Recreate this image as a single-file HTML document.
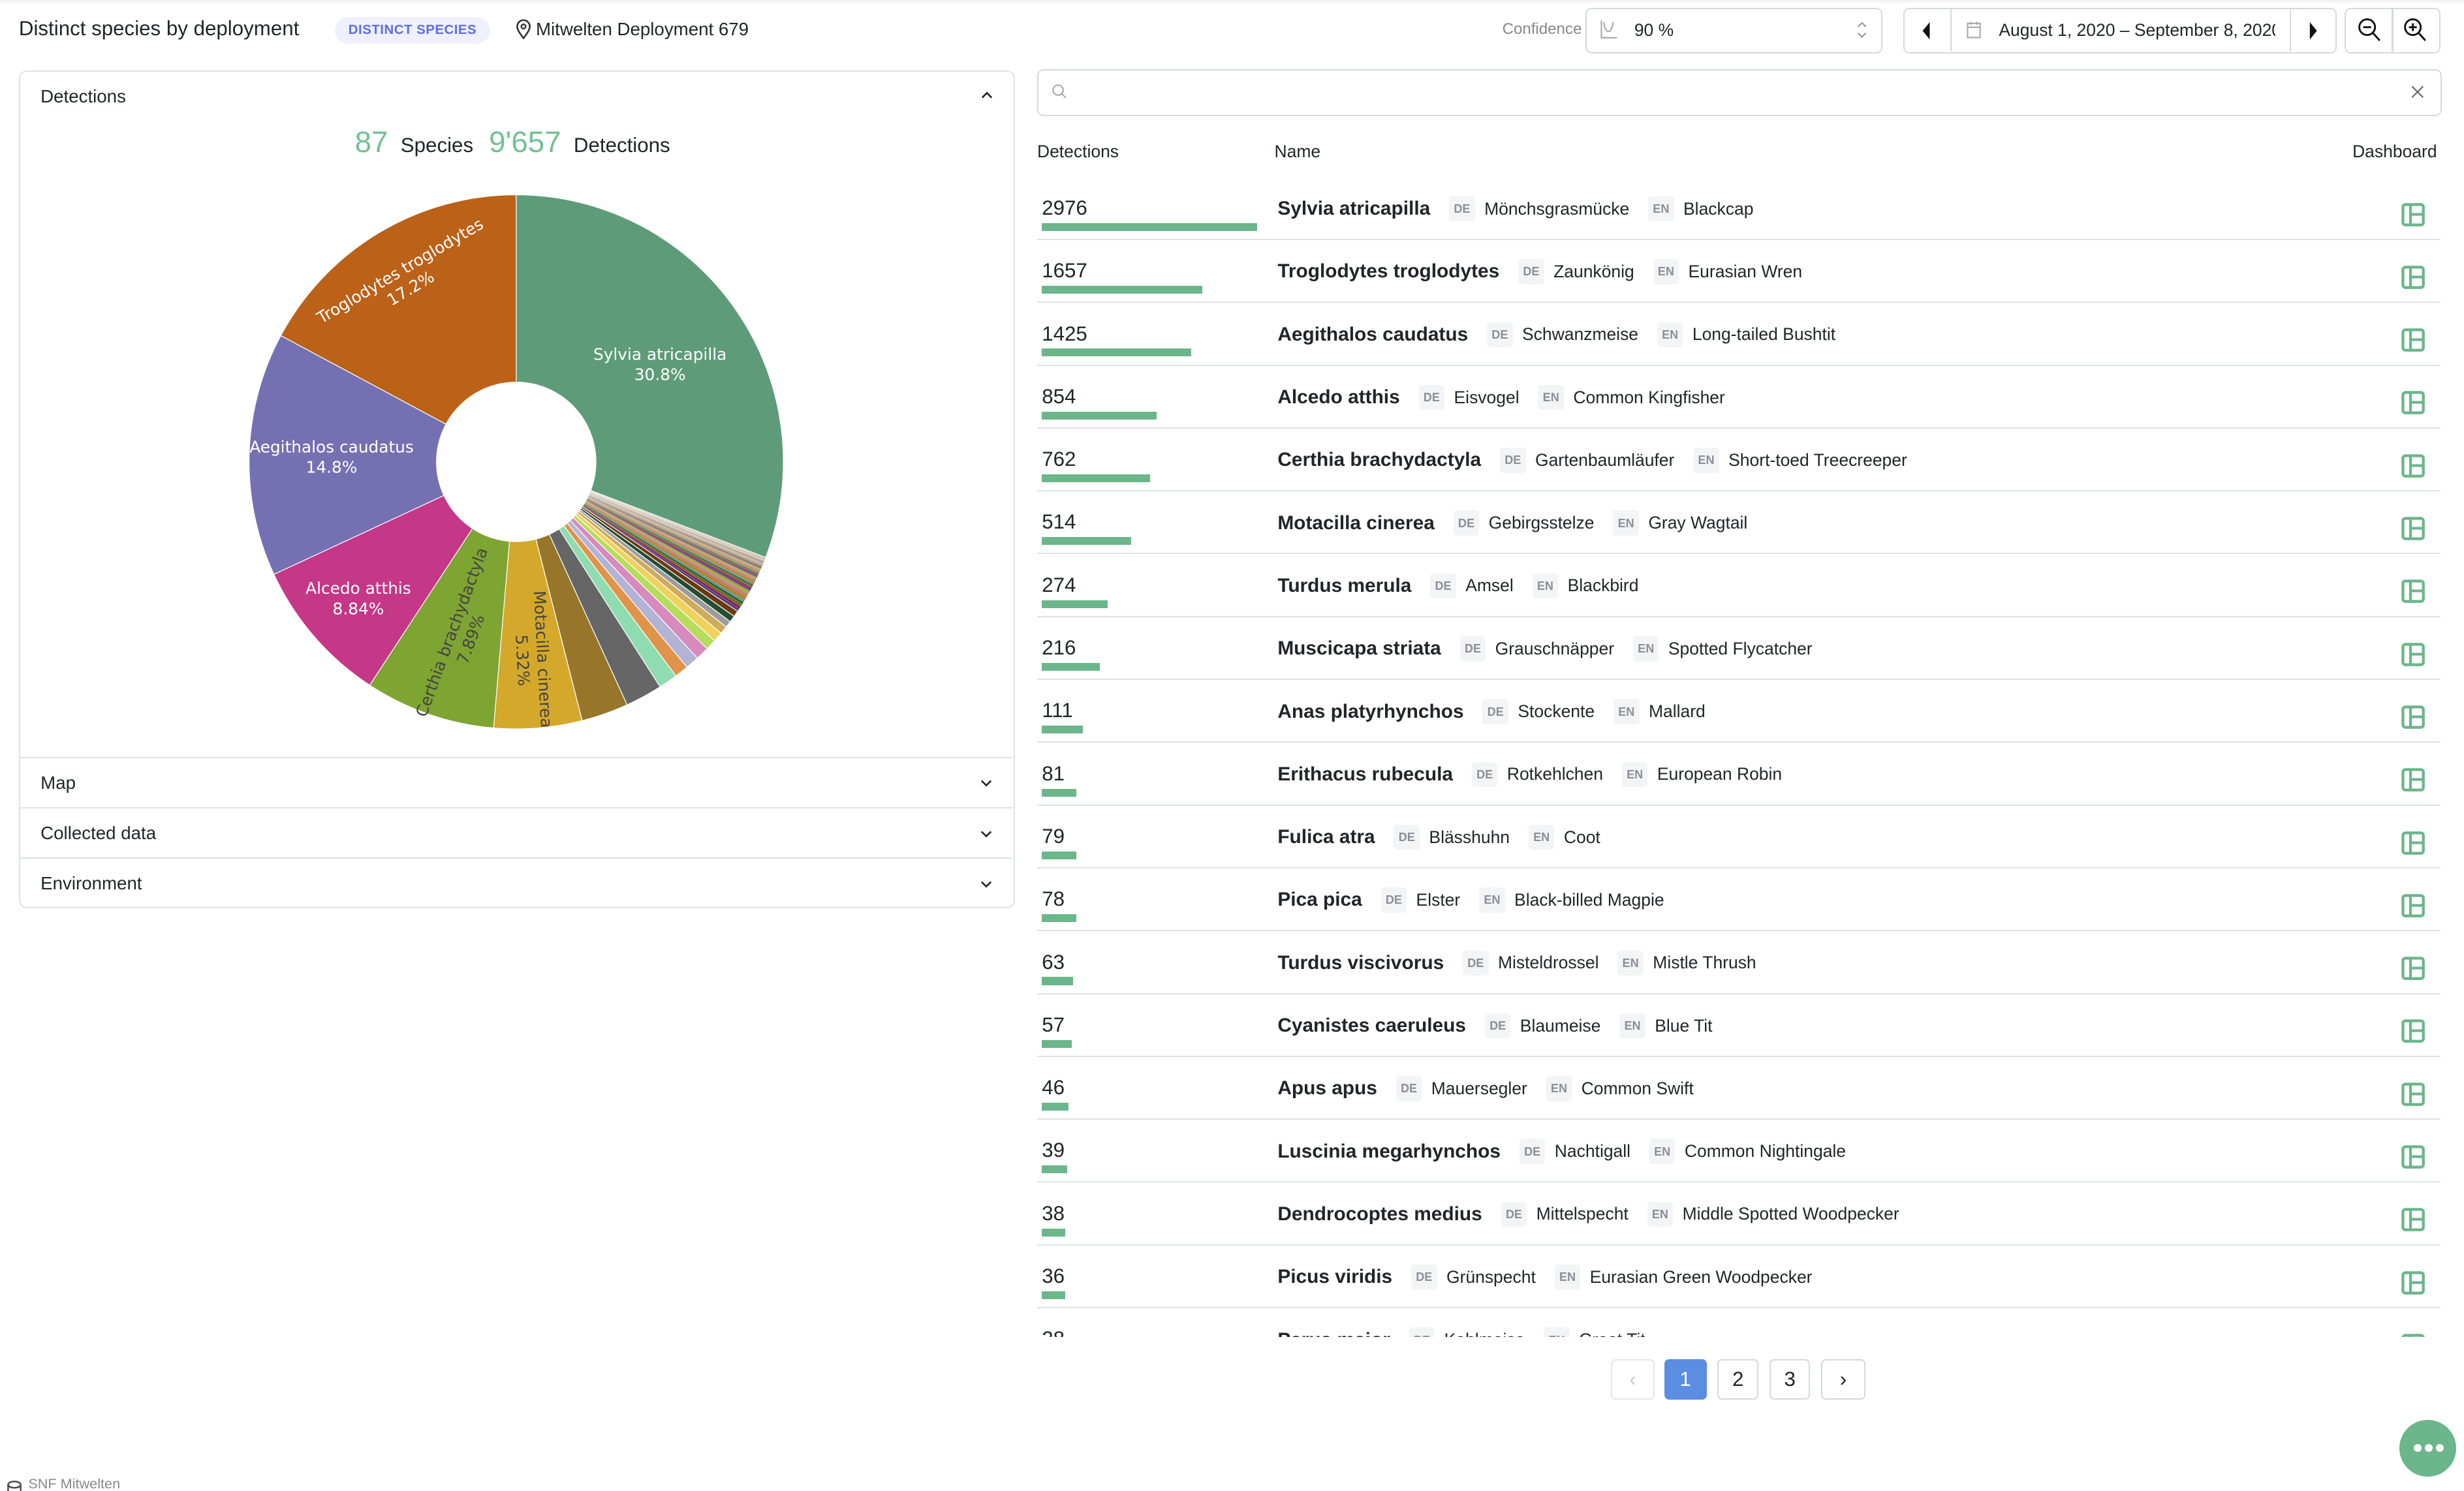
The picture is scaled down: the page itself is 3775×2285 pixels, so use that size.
<!DOCTYPE html>
<html><head><meta charset="utf-8">
<style>
html,body{margin:0;padding:0;background:#fff;overflow:hidden;width:3775px;height:2285px;}
#root{position:relative;width:1568px;height:949px;zoom:2.40753;font-family:"Liberation Sans","DejaVu Sans",sans-serif;color:#212529;overflow:hidden;}
.abs{position:absolute;}
.topshade{position:absolute;left:0;top:0;width:1568px;height:3px;background:linear-gradient(#f0f0f0,#fff);}
.title{left:12px;top:11px;font-size:13px;}
.badge{left:213px;top:11px;width:99px;height:17px;border-radius:9px;background:#eef0fd;color:#5f6fe0;font-size:8.5px;font-weight:bold;line-height:17px;text-align:center;letter-spacing:.2px;}
.loc{left:341px;top:12px;font-size:11.5px;}
.box{position:absolute;border:1px solid #d5d8dc;border-radius:4px;background:#fff;box-sizing:border-box;}
.card{left:12px;top:45px;width:634px;height:533px;border:1px solid #dee2e6;border-radius:5px;box-sizing:border-box;}
.sect{position:absolute;left:0;width:632px;border-top:1px solid #dee2e6;font-size:11.5px;}
.sect span{position:absolute;left:13px;}
.chev{position:absolute;right:12px;width:10px;height:10px;}
.row{position:absolute;left:660px;width:893px;height:39px;border-bottom:1px solid #dee2e6;}
.num{position:absolute;left:3px;top:12px;font-size:13px;}
.bar{position:absolute;left:3px;top:29px;height:5px;background:#6bb68a;}
.nm{position:absolute;left:153px;top:12px;font-size:12.4px;font-weight:600;white-space:nowrap;display:flex;align-items:center;}
.tag{display:inline-block;background:#f3f4f6;color:#8a8f98;font-size:7.5px;font-weight:bold;padding:3px 3px;border-radius:2px;margin:0 6px 0 12px;line-height:10px;}
.tn{font-weight:normal;font-size:11px;}
.dash{position:absolute;left:868px;top:16px;width:15px;height:15px;}
.pg{position:absolute;top:865px;height:26px;border:1px solid #d5d8dc;border-radius:3px;box-sizing:border-box;background:#fff;font-size:13px;text-align:center;line-height:24px;}
</style></head><body>
<div id="root">
<div class="topshade"></div>
<div class="abs title">Distinct species by deployment</div>
<div class="abs badge">DISTINCT SPECIES</div>
<svg class="abs" style="left:328px;top:12px" width="10" height="13" viewBox="0 0 10 13"><path d="M5 12.3C2.5 9 1 6.8 1 4.8a4 4 0 0 1 8 0C9 6.8 7.5 9 5 12.3z" fill="none" stroke="#333" stroke-width="1.1"/><circle cx="5" cy="4.8" r="1.4" fill="none" stroke="#333" stroke-width="1"/></svg>
<div class="abs loc">Mitwelten Deployment 679</div>

<div class="abs" style="left:956px;top:13px;font-size:10px;color:#888">Confidence</div>
<div class="box" style="left:1009px;top:5px;width:189px;height:29px;"></div>
<svg class="abs" style="left:1018px;top:12px" width="12" height="14" viewBox="0 0 12 14"><path d="M1 1v11h10" fill="none" stroke="#aaa" stroke-width=".9"/><path d="M2.5 2c1 8 5 8 6 0" fill="none" stroke="#aaa" stroke-width=".9"/></svg>
<div class="abs" style="left:1040px;top:13px;font-size:11px">90 %</div>
<svg class="abs" style="left:1181px;top:12px" width="8" height="14" viewBox="0 0 8 14"><path d="M1.5 5L4 2.5 6.5 5M1.5 9L4 11.5 6.5 9" fill="none" stroke="#999" stroke-width=".9"/></svg>

<div class="box" style="left:1211px;top:5px;width:276px;height:29px;"></div>
<div class="abs" style="left:1241px;top:6px;width:1px;height:27px;background:#d5d8dc"></div>
<div class="abs" style="left:1457px;top:6px;width:1px;height:27px;background:#d5d8dc"></div>
<svg class="abs" style="left:1222px;top:14px" width="8" height="11"><path d="M6 0L1.5 5.5 6 11z" fill="#111"/></svg>
<svg class="abs" style="left:1468px;top:14px" width="8" height="11"><path d="M2 0L6.5 5.5 2 11z" fill="#111"/></svg>
<svg class="abs" style="left:1251px;top:13px" width="10" height="12" viewBox="0 0 10 12"><rect x="1" y="2" width="8" height="9" fill="none" stroke="#aaa" stroke-width=".9"/><path d="M1 4.5h8M3 1v2M7 1v2" stroke="#aaa" stroke-width=".9"/></svg>
<div class="abs" style="left:1272px;top:13px;font-size:11px;width:176px;overflow:hidden;white-space:nowrap">August 1, 2020 – September 8, 2020</div>

<div class="box" style="left:1492px;top:5px;width:61px;height:29px;"></div>
<div class="abs" style="left:1522px;top:6px;width:1px;height:27px;background:#d5d8dc"></div>
<svg class="abs" style="left:1500px;top:11px" width="16" height="17" viewBox="0 0 16 17"><circle cx="6.5" cy="6.5" r="5" fill="none" stroke="#111" stroke-width="1.2"/><path d="M10 10l4.5 5M4 6.5h5" stroke="#111" stroke-width="1.2"/></svg>
<svg class="abs" style="left:1529px;top:11px" width="16" height="17" viewBox="0 0 16 17"><circle cx="6.5" cy="6.5" r="5" fill="none" stroke="#111" stroke-width="1.2"/><path d="M10 10l4.5 5M4 6.5h5M6.5 4v5" stroke="#111" stroke-width="1.2"/></svg>

<div class="abs card">
  <div class="abs" style="left:13px;top:9px;font-size:11.5px">Detections</div>
  <svg class="chev" style="top:10px" viewBox="0 0 10 10"><path d="M2 6.5L5 3.5 8 6.5" fill="none" stroke="#222" stroke-width="1.1"/></svg>
  <div class="abs" style="left:213px;top:34px;white-space:nowrap"><span style="color:#72c194;font-size:19px">87</span><span style="font-size:13px;margin:0 10px 0 8px">Species</span><span style="color:#72c194;font-size:19px">9'657</span><span style="font-size:13px;margin-left:8px">Detections</span></div>
  <div class="sect" style="top:436px;height:31px"><span style="top:9px">Map</span><svg class="chev" style="top:11px" viewBox="0 0 10 10"><path d="M2 3.5L5 6.5 8 3.5" fill="none" stroke="#222" stroke-width="1.1"/></svg></div>
  <div class="sect" style="top:468px;height:31px"><span style="top:9px">Collected data</span><svg class="chev" style="top:11px" viewBox="0 0 10 10"><path d="M2 3.5L5 6.5 8 3.5" fill="none" stroke="#222" stroke-width="1.1"/></svg></div>
  <div class="sect" style="top:500px;height:31px"><span style="top:9px">Environment</span><svg class="chev" style="top:11px" viewBox="0 0 10 10"><path d="M2 3.5L5 6.5 8 3.5" fill="none" stroke="#222" stroke-width="1.1"/></svg></div>
</div>

<svg id="pie" class="abs" style="left:0;top:0" width="660" height="480" viewBox="0 0 660 480">
<g id="wedges"></g>
<circle cx="328.5" cy="294" r="51" fill="#fff"/>
<g font-family="DejaVu Sans, Liberation Sans, sans-serif" font-size="10.3" text-anchor="middle" fill="#fff">
<text x="420" y="229">Sylvia atricapilla</text><text x="420" y="242">30.8%</text>
<text x="211" y="288">Aegithalos caudatus</text><text x="211" y="301">14.8%</text>
<text x="228" y="378">Alcedo atthis</text><text x="228" y="391">8.84%</text>
<g transform="rotate(-30.7 258 178)"><text x="258" y="175">Troglodytes troglodytes</text><text x="258" y="188">17.2%</text></g>
<g transform="rotate(-69.8 294.5 405)" fill="#444"><text x="294.5" y="401">Certhia brachydactyla</text><text x="294.5" y="414">7.89%</text></g>
<g transform="rotate(87 339 420)" fill="#444"><text x="339" y="417">Motacilla cinerea</text><text x="339" y="430">5.32%</text></g>
</g>
</svg>

<div class="box" style="left:660px;top:44px;width:894px;height:30px;"></div>
<svg class="abs" style="left:669px;top:53px" width="10" height="10" viewBox="0 0 10 10"><circle cx="4.2" cy="4.2" r="3.2" fill="none" stroke="#aaa" stroke-width=".9"/><path d="M6.6 6.6L9 9" stroke="#aaa" stroke-width=".9"/></svg>
<svg class="abs" style="left:1534px;top:54px" width="9" height="9" viewBox="0 0 9 9"><path d="M1 1l7 7M8 1L1 8" stroke="#666" stroke-width=".9"/></svg>
<div class="abs" style="left:660px;top:90px;font-size:11px">Detections</div>
<div class="abs" style="left:811px;top:90px;font-size:11px">Name</div>
<div class="abs" style="left:1497px;top:90px;font-size:11px">Dashboard</div>

<div class="abs" style="left:0;top:113px;width:1568px;height:738px;overflow:hidden">
<div style="position:absolute;left:0;top:-113px;width:1568px;height:1000px">
<div class="row" style="top:113px"><div class="num">2976</div><div class="bar" style="width:137px"></div><div class="nm">Sylvia atricapilla<span class="tag">DE</span><span class="tn">Mönchsgrasmücke</span><span class="tag">EN</span><span class="tn">Blackcap</span></div><svg class="dash"><use href="#di"/></svg></div>
<div class="row" style="top:153px"><div class="num">1657</div><div class="bar" style="width:102px"></div><div class="nm">Troglodytes troglodytes<span class="tag">DE</span><span class="tn">Zaunkönig</span><span class="tag">EN</span><span class="tn">Eurasian Wren</span></div><svg class="dash"><use href="#di"/></svg></div>
<div class="row" style="top:193px"><div class="num">1425</div><div class="bar" style="width:95px"></div><div class="nm">Aegithalos caudatus<span class="tag">DE</span><span class="tn">Schwanzmeise</span><span class="tag">EN</span><span class="tn">Long-tailed Bushtit</span></div><svg class="dash"><use href="#di"/></svg></div>
<div class="row" style="top:233px"><div class="num">854</div><div class="bar" style="width:73px"></div><div class="nm">Alcedo atthis<span class="tag">DE</span><span class="tn">Eisvogel</span><span class="tag">EN</span><span class="tn">Common Kingfisher</span></div><svg class="dash"><use href="#di"/></svg></div>
<div class="row" style="top:273px"><div class="num">762</div><div class="bar" style="width:69px"></div><div class="nm">Certhia brachydactyla<span class="tag">DE</span><span class="tn">Gartenbaumläufer</span><span class="tag">EN</span><span class="tn">Short-toed Treecreeper</span></div><svg class="dash"><use href="#di"/></svg></div>
<div class="row" style="top:313px"><div class="num">514</div><div class="bar" style="width:57px"></div><div class="nm">Motacilla cinerea<span class="tag">DE</span><span class="tn">Gebirgsstelze</span><span class="tag">EN</span><span class="tn">Gray Wagtail</span></div><svg class="dash"><use href="#di"/></svg></div>
<div class="row" style="top:353px"><div class="num">274</div><div class="bar" style="width:42px"></div><div class="nm">Turdus merula<span class="tag">DE</span><span class="tn">Amsel</span><span class="tag">EN</span><span class="tn">Blackbird</span></div><svg class="dash"><use href="#di"/></svg></div>
<div class="row" style="top:393px"><div class="num">216</div><div class="bar" style="width:37px"></div><div class="nm">Muscicapa striata<span class="tag">DE</span><span class="tn">Grauschnäpper</span><span class="tag">EN</span><span class="tn">Spotted Flycatcher</span></div><svg class="dash"><use href="#di"/></svg></div>
<div class="row" style="top:433px"><div class="num">111</div><div class="bar" style="width:26px"></div><div class="nm">Anas platyrhynchos<span class="tag">DE</span><span class="tn">Stockente</span><span class="tag">EN</span><span class="tn">Mallard</span></div><svg class="dash"><use href="#di"/></svg></div>
<div class="row" style="top:473px"><div class="num">81</div><div class="bar" style="width:22px"></div><div class="nm">Erithacus rubecula<span class="tag">DE</span><span class="tn">Rotkehlchen</span><span class="tag">EN</span><span class="tn">European Robin</span></div><svg class="dash"><use href="#di"/></svg></div>
<div class="row" style="top:513px"><div class="num">79</div><div class="bar" style="width:22px"></div><div class="nm">Fulica atra<span class="tag">DE</span><span class="tn">Blässhuhn</span><span class="tag">EN</span><span class="tn">Coot</span></div><svg class="dash"><use href="#di"/></svg></div>
<div class="row" style="top:553px"><div class="num">78</div><div class="bar" style="width:22px"></div><div class="nm">Pica pica<span class="tag">DE</span><span class="tn">Elster</span><span class="tag">EN</span><span class="tn">Black-billed Magpie</span></div><svg class="dash"><use href="#di"/></svg></div>
<div class="row" style="top:593px"><div class="num">63</div><div class="bar" style="width:20px"></div><div class="nm">Turdus viscivorus<span class="tag">DE</span><span class="tn">Misteldrossel</span><span class="tag">EN</span><span class="tn">Mistle Thrush</span></div><svg class="dash"><use href="#di"/></svg></div>
<div class="row" style="top:633px"><div class="num">57</div><div class="bar" style="width:19px"></div><div class="nm">Cyanistes caeruleus<span class="tag">DE</span><span class="tn">Blaumeise</span><span class="tag">EN</span><span class="tn">Blue Tit</span></div><svg class="dash"><use href="#di"/></svg></div>
<div class="row" style="top:673px"><div class="num">46</div><div class="bar" style="width:17px"></div><div class="nm">Apus apus<span class="tag">DE</span><span class="tn">Mauersegler</span><span class="tag">EN</span><span class="tn">Common Swift</span></div><svg class="dash"><use href="#di"/></svg></div>
<div class="row" style="top:713px"><div class="num">39</div><div class="bar" style="width:16px"></div><div class="nm">Luscinia megarhynchos<span class="tag">DE</span><span class="tn">Nachtigall</span><span class="tag">EN</span><span class="tn">Common Nightingale</span></div><svg class="dash"><use href="#di"/></svg></div>
<div class="row" style="top:753px"><div class="num">38</div><div class="bar" style="width:15px"></div><div class="nm">Dendrocoptes medius<span class="tag">DE</span><span class="tn">Mittelspecht</span><span class="tag">EN</span><span class="tn">Middle Spotted Woodpecker</span></div><svg class="dash"><use href="#di"/></svg></div>
<div class="row" style="top:793px"><div class="num">36</div><div class="bar" style="width:15px"></div><div class="nm">Picus viridis<span class="tag">DE</span><span class="tn">Grünspecht</span><span class="tag">EN</span><span class="tn">Eurasian Green Woodpecker</span></div><svg class="dash"><use href="#di"/></svg></div>
<div class="row" style="top:833px"><div class="num">28</div><div class="bar" style="width:13px"></div><div class="nm">Parus major<span class="tag">DE</span><span class="tn">Kohlmeise</span><span class="tag">EN</span><span class="tn">Great Tit</span></div><svg class="dash"><use href="#di"/></svg></div>
</div></div>

<svg width="0" height="0" style="position:absolute"><defs><g id="di"><rect x="1" y="1" width="13" height="13" rx="1.6" fill="none" stroke="#6bb68a" stroke-width="1.8"/><path d="M5.8 1v13M5.8 7.3h8" stroke="#6bb68a" stroke-width="1.7"/></g></defs></svg>

<div class="pg" style="left:1025px;width:28px;color:#ccc;border-color:#e4e6e9">‹</div>
<div class="pg" style="left:1059px;width:27px;background:#5b8de3;border-color:#5b8de3;color:#fff">1</div>
<div class="pg" style="left:1093px;width:26px">2</div>
<div class="pg" style="left:1126px;width:26px">3</div>
<div class="pg" style="left:1159px;width:28px">›</div>

<div class="abs" style="left:1527px;top:904px;width:36px;height:36px;border-radius:50%;background:#6bb68a"></div>
<div class="abs" style="left:1536px;top:919px;width:5px;height:5px;border-radius:50%;background:#fff"></div>
<div class="abs" style="left:1543px;top:919px;width:5px;height:5px;border-radius:50%;background:#fff"></div>
<div class="abs" style="left:1550px;top:919px;width:5px;height:5px;border-radius:50%;background:#fff"></div>

<svg class="abs" style="left:4px;top:942px" width="10" height="7" viewBox="0 0 10 7"><ellipse cx="5" cy="3" rx="4" ry="2" fill="none" stroke="#444" stroke-width="1"/><path d="M1 3v4M9 3v4" stroke="#444" stroke-width="1"/></svg>
<div class="abs" style="left:18px;top:940px;font-size:9px;line-height:9px;height:9px;color:#888;overflow:hidden">SNF Mitwelten</div>
</div>
<script>
(function(){
var cx=328.5,cy=294,r=170;
var named=[[17.16,"#bb6118"],[14.76,"#7570b1"],[8.84,"#c53787"],[7.89,"#7ea432"],[5.32,"#d4a82a"],[2.84,"#97762a"],[2.24,"#666666"],[1.15,"#8fdcb0"],[0.84,"#e0944a"],[0.82,"#b3b3d6"],[0.81,"#d78abd"],[0.65,"#b5dc5a"],[0.59,"#efd25e"],[0.48,"#cfab5a"],[0.40,"#9c9c9c"],[0.39,"#244d33"],[0.37,"#6b3a0b"]];
var extra=["#4b3d82","#8b1b5c","#6e6a13","#2d5a3d","#5e9b79","#c56a1a","#a08040","#d46a8a","#8ab040","#b08a30"];
var s=0;named.forEach(function(n){s+=n[0];});
var rest=100-30.82-s, tails=[], k=0.29, t=0, n=60;
for(var i=0;i<n;i++){var v=k*Math.pow(0.955,i);tails.push(v);t+=v;}
tails=tails.map(function(v){return v*rest/t;});
var list=[[30.82,"#5e9b79"]];
for(var j=tails.length-1;j>=0;j--)list.push([tails[j],extra[j%extra.length]]);
for(var m=named.length-1;m>=0;m--)list.push(named[m]);
var a=0,g=document.getElementById("wedges"),html="";
list.forEach(function(it){
 var a0=a/100*2*Math.PI,a1=(a+it[0])/100*2*Math.PI;a+=it[0];
 var x0=cx+r*Math.sin(a0),y0=cy-r*Math.cos(a0),x1=cx+r*Math.sin(a1),y1=cy-r*Math.cos(a1);
 var lg=(a1-a0)>Math.PI?1:0;
 html+='<path d="M'+cx+' '+cy+'L'+x0.toFixed(2)+' '+y0.toFixed(2)+'A'+r+' '+r+' 0 '+lg+' 1 '+x1.toFixed(2)+' '+y1.toFixed(2)+'Z" fill="'+it[1]+'" stroke="#fff" stroke-width="'+(it[0]>0.3?0.5:0.1)+'"/>';
});
g.innerHTML=html;
})();
</script>
</body></html>
